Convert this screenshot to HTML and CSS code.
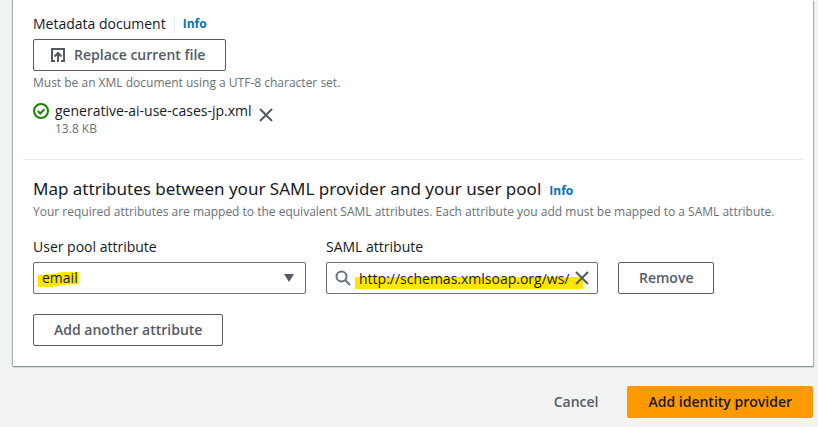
FILE: index.html
```html
<!DOCTYPE html>
<html lang="en">
<head>
<meta charset="utf-8">
<title>Add identity provider</title>
<link rel="stylesheet" href="styles.css">
</head>
<body>
<form class="page">
  <section class="panel">
    <div class="metadata">
      <div class="label-row">
        <span class="label">Metadata document</span>
        <a class="info info-divided" href="#">Info</a>
      </div>
      <button class="button upload" type="button">
        <svg class="icon" viewBox="0 0 16 16" aria-hidden="true"><path d="M5 14H2V2h12v12h-3M8 15V6M4.500 9.500 8 6l3.500 3.500"/></svg>
        Replace current file
      </button>
      <p class="hint">Must be an XML document using a UTF-8 character set.</p>
      <div class="file">
        <svg class="icon success" viewBox="0 0 16 16" aria-hidden="true"><circle cx="8" cy="8" r="7"/><path d="m4.700 8 2.500 2.500 4.200-4.300"/></svg>
        <div>
          <div class="file-name">generative-ai-use-cases-jp.xml</div>
          <div class="file-size">13.8 KB</div>
        </div>
        <button class="icon-button" type="button" aria-label="Remove file">
          <svg class="icon" viewBox="0 0 16 16" aria-hidden="true"><path d="m2 2 12 12M14 2 2 14"/></svg>
        </button>
      </div>
    </div>
    <hr class="divider">
    <div class="mapping">
      <div class="heading-row">
        <h2>Map attributes between your SAML provider and your user pool</h2>
        <a class="info" href="#">Info</a>
      </div>
      <p class="description">Your required attributes are mapped to the equivalent SAML attributes. Each attribute you add must be mapped to a SAML attribute.</p>
      <div class="attributes">
        <div class="field">
          <label for="pool">User pool attribute</label>
          <div class="control">
            <svg class="marker marker-email" viewBox="0 0 41 15" preserveAspectRatio="none" aria-hidden="true"><path d="M0 3 14 2 24 0H41V12L25 13 14 15H0Z"/></svg>
            <select id="pool"><option>email</option></select>
            <svg class="caret" viewBox="0 0 10 8" aria-hidden="true"><path d="M0 0h10L5 8Z"/></svg>
          </div>
        </div>
        <div class="field">
          <label for="saml">SAML attribute</label>
          <div class="control search">
            <svg class="marker marker-url" viewBox="0 0 228 12" preserveAspectRatio="none" aria-hidden="true"><path d="M0 0H228V12H0Z"/></svg>
            <svg class="icon magnifier" viewBox="0 0 16 16" aria-hidden="true"><circle cx="6.500" cy="6.500" r="5"/><path d="m10 10 5 5"/></svg>
            <input id="saml" type="text" value="http://schemas.xmlsoap.org/ws/">
            <button class="icon-button" type="button" aria-label="Clear">
              <svg class="icon" viewBox="0 0 16 16" aria-hidden="true"><path d="m2 2 12 12M14 2 2 14"/></svg>
            </button>
          </div>
        </div>
        <button class="button" type="button">Remove</button>
      </div>
      <button class="button" type="button">Add another attribute</button>
    </div>
  </section>
  <footer class="actions">
    <button class="button link" type="button">Cancel</button>
    <button class="button primary" type="button">Add identity provider</button>
  </footer>
</form>
</body>
</html>
```
FILE: styles.css
```css
* { box-sizing: border-box; }

body {
  margin: 0;
  background: #f2f3f3;
  color: #16191f;
  font: 14px/22px "Open Sans", "Noto Sans", sans-serif;
}

h2, p { margin: 0; }

.page { padding: 0 5px 8px 13px; }

.panel {
  background: #fff;
  padding-bottom: 20px;
  box-shadow: 0 1px 1px #879596, 1px 1px 1px #aab7b8, -1px 0 1px #aab7b8;
}

.metadata { padding: 13px 20px 0; }

.label-row, .heading-row { display: flex; align-items: center; }

.label-row { margin-bottom: 4px; gap: 8px; }

.info {
  color: #0073bb;
  font-size: 12px;
  line-height: 18px;
  font-weight: 700;
  text-decoration: none;
}

.info-divided { border-left: 1px solid #eaeded; padding-left: 8px; }

.button {
  display: inline-flex;
  align-items: center;
  justify-content: center;
  height: 32px;
  padding: 0 20px;
  border: 1px solid #545b64;
  border-radius: 2px;
  background: #fff;
  color: #545b64;
  font: 600 14px/20px "Open Sans", "Noto Sans", sans-serif;
  white-space: nowrap;
}

.upload { gap: 8px; padding: 0 20px 0 16px; }

.icon {
  display: block;
  flex: none;
  width: 16px;
  height: 16px;
  fill: none;
  stroke: #545b64;
  stroke-width: 2;
}

.success { stroke: #1d8102; margin-top: 3px; }

.magnifier { stroke: #687078; }

.hint, .description, .file-size { color: #687078; font-size: 12px; line-height: 18px; }

.hint { margin-top: 3px; }

.file { display: flex; align-items: flex-start; margin-top: 8px; gap: 6px; }

.file-size { line-height: 14px; }

.icon-button { padding: 0; border: 0; background: none; }

.file .icon-button { margin-top: 7px; }

.divider { margin: 23px 10px 0; border: 0; border-top: 1px solid #eaeded; }

.mapping { padding: 18px 20px 0; }

.heading-row { gap: 8px; }

h2 { font-family: "Noto Sans", "Open Sans", sans-serif; font-size: 17px; line-height: 22px; font-weight: 400; white-space: nowrap; }

.heading-row .info { margin-top: 3px; }

.description { margin-top: 3px; }

.attributes {
  display: grid;
  grid-template-columns: 273fr 272fr 175fr;
  align-items: end;
  justify-items: start;
  gap: 20px;
  margin: 15px 0 20px;
}

.field { width: 100%; }

.field label { display: block; margin-bottom: 4px; }

.control {
  position: relative;
  display: flex;
  align-items: center;
  height: 32px;
  border: 1px solid #687078;
  border-radius: 2px;
}

.control select, .control input {
  position: relative;
  flex: 1;
  min-width: 0;
  height: 30px;
  padding: 0 8px;
  border: 0;
  background: transparent;
  color: #16191f;
  font: inherit;
  appearance: none;
}

.control input { padding: 0 0 0 8px; }

.search { padding: 0 7px 0 8px; }

.search .icon { position: relative; }

.marker { position: absolute; fill: #ffe600; }

.marker-email { left: 4px; top: 9px; width: 41px; height: 15px; }

.marker-url { left: 28px; top: 14px; width: 228px; height: 12px; }

.caret { position: absolute; right: 11px; width: 10px; height: 8px; fill: #545b64; pointer-events: none; }

.actions { display: flex; justify-content: flex-end; gap: 8px; margin-top: 20px; }

.link { border-color: transparent; background: transparent; }

.primary { border-color: #f90; background: #f90; color: #16191f; }
```
